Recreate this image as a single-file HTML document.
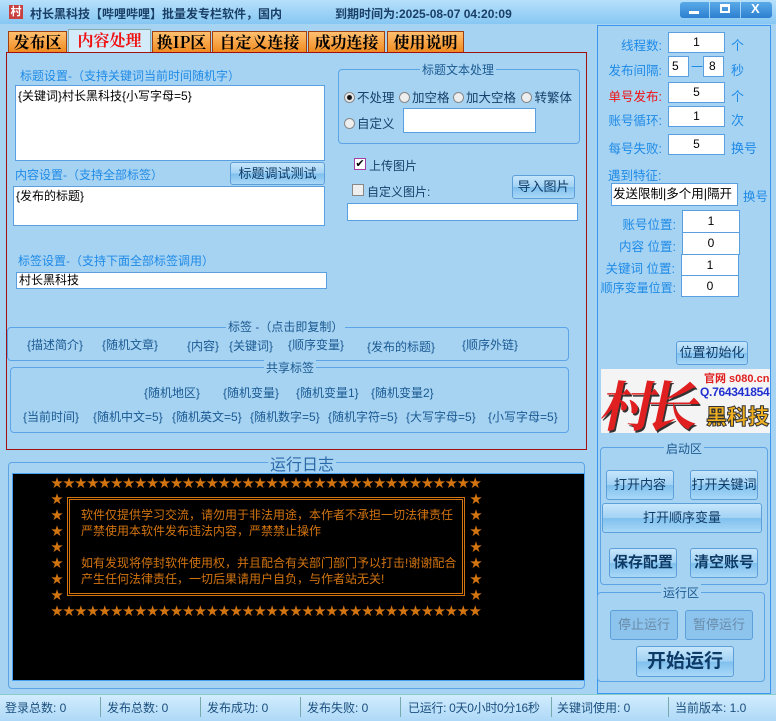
<!DOCTYPE html><html><head><meta charset="utf-8"><style>
*{margin:0;padding:0;box-sizing:border-box}
body{width:776px;height:721px;overflow:hidden;background:#a7d3f3;font-family:"Liberation Sans","Noto Sans CJK SC",sans-serif;font-size:12px;position:relative;color:#000}
.a{position:absolute;white-space:nowrap}
.lb{color:#1e8ae6}
.in{position:absolute;background:#fff;border:1px solid #5aa0e0}
.btn{position:absolute;border:1px solid #5d9fd8;border-radius:3px;background:linear-gradient(#c6e6fb,#a2d2f4 50%,#7fc0ee 51%,#a9d8f7);color:#0e3a66;text-align:center;font-size:13px;white-space:nowrap}
.grp{position:absolute;border:1px solid #5ca4e6;border-radius:4px}
.gt{position:absolute;background:#a7d3f3;padding:0 2px;color:#1b5a90;font-size:12px;white-space:nowrap}
.tab{position:absolute;top:31px;height:21px;background:linear-gradient(#ffc070,#f08b20);border:1px solid #a04010;border-bottom:none;font-size:16px;line-height:20px;text-align:center;color:#000;font-family:"Noto Serif CJK SC","Liberation Serif",serif;font-weight:bold;white-space:nowrap;overflow:hidden}
.rd{display:inline-block;width:11px;height:11px;border-radius:50%;border:1px solid #888;background:#eee;vertical-align:-1px;margin-right:2px}
.tg{color:#1a5a92}
.log{position:absolute;color:#d27410;font-size:12px;white-space:pre;line-height:16px}
.rl{position:absolute;white-space:nowrap;color:#1e8ae6;font-size:12.5px;text-align:right}
</style></head><body>
<div class="a" style="left:0;top:0;width:776px;height:24px;background:linear-gradient(#b6e0fb,#86c7f3)"></div>
<div class="a" style="left:9px;top:5px;width:14px;height:14px;background:#c84040;color:#fff;font-size:11px;text-align:center;line-height:14px;font-weight:bold">村</div>
<div class="a" style="left:30px;top:5px;font-size:12px;font-weight:bold;color:#1a3f66">村长黑科技【哔哩哔哩】批量发专栏软件，国内</div>
<div class="a" style="left:335px;top:5px;font-size:12px;font-weight:bold;color:#1a3f66">到期时间为:2025-08-07 04:20:09</div>
<div class="a" style="left:680px;top:2px;width:29px;height:16px;background:linear-gradient(#5aaae8,#2d7fd0);border-radius:3px 0 0 3px"></div>
<div class="a" style="left:710px;top:2px;width:30px;height:16px;background:linear-gradient(#5aaae8,#2d7fd0)"></div>
<div class="a" style="left:741px;top:2px;width:31px;height:16px;background:linear-gradient(#5aaae8,#2d7fd0);border-radius:0 3px 3px 0"></div>
<div class="a" style="left:689px;top:11px;width:10px;height:3px;background:#fff"></div>
<div class="a" style="left:720px;top:4px;width:10px;height:9px;border:2px solid #fff;border-top-width:3px"></div>
<div class="a" style="left:751px;top:1px;color:#fff;font-size:13px;font-weight:bold">X</div>

<div class="tab" style="left:68px;width:83px;top:29px;height:23px;background:#d4ecfa;color:#f01010;border-color:#8aa">内容处理</div>
<div class="tab" style="left:152px;width:59px">换IP区</div>
<div class="tab" style="left:212px;width:95px">自定义连接</div>
<div class="tab" style="left:308px;width:77px">成功连接</div>
<div class="tab" style="left:387px;width:77px">使用说明</div>
<div class="tab" style="left:8px;width:59px">发布区</div>
<div class="a" style="left:6px;top:52px;width:581px;height:398px;border:1px solid #a01010"></div>

<div class="a lb" style="left:20px;top:67px">标题设置-（支持关键词当前时间随机字）</div>
<div class="in" style="left:15px;top:85px;width:310px;height:76px"><div style="padding:1px 2px">{关键词}村长黑科技{小写字母=5}</div></div>
<div class="a lb" style="left:15px;top:166px">内容设置-（支持全部标签）</div>
<div class="btn" style="left:230px;top:162px;width:95px;height:23px;line-height:21px">标题调试测试</div>
<div class="in" style="left:13px;top:186px;width:312px;height:40px"><div style="padding:0 2px">{发布的标题}</div></div>
<div class="a lb" style="left:18px;top:252px">标签设置-（支持下面全部标签调用）</div>
<div class="in" style="left:16px;top:272px;width:311px;height:17px"><div style="padding:0 2px;line-height:15px">村长黑科技</div></div>

<div class="grp" style="left:338px;top:69px;width:242px;height:75px"></div>
<div class="gt" style="left:420px;top:61px">标题文本处理</div>
<div class="a" style="left:344px;top:87px;font-size:12.5px;color:#14406a"><span class="rd" style="background:radial-gradient(#111 2px,#eee 3px)"></span>不处理 <span class="rd" style="margin-left:1px"></span>加空格 <span class="rd"></span>加大空格 <span class="rd" style="margin-left:2px"></span>转繁体</div>
<div class="a" style="left:344px;top:113px;font-size:12.5px;color:#14406a"><span class="rd"></span>自定义</div>
<div class="in" style="left:403px;top:108px;width:133px;height:25px"></div>
<div class="a" style="left:354px;top:158px;width:12px;height:12px;border:1px solid #a040a0;background:#fff;font-size:11px;line-height:10px;text-align:center">✔</div>
<div class="a" style="left:369px;top:157px;color:#14406a">上传图片</div>
<div class="a" style="left:352px;top:184px;width:12px;height:12px;border:1px solid #888;background:#eee"></div>
<div class="a" style="left:367px;top:183px;color:#14406a">自定义图片:</div>
<div class="btn" style="left:512px;top:175px;width:63px;height:24px;line-height:22px">导入图片</div>
<div class="in" style="left:347px;top:203px;width:231px;height:18px"></div>

<div class="grp" style="left:7px;top:327px;width:562px;height:34px"></div>
<div class="gt" style="left:226px;top:318px">标签 -（点击即复制）</div>
<div class="a tg" style="left:27px;top:336px">{描述简介}</div>
<div class="a tg" style="left:102px;top:336px">{随机文章}</div>
<div class="a tg" style="left:187px;top:337px">{内容}</div>
<div class="a tg" style="left:229px;top:337px">{关键词}</div>
<div class="a tg" style="left:288px;top:336px">{顺序变量}</div>
<div class="a tg" style="left:367px;top:338px">{发布的标题}</div>
<div class="a tg" style="left:462px;top:336px">{顺序外链}</div>
<div class="grp" style="left:10px;top:367px;width:559px;height:66px"></div>
<div class="gt" style="left:264px;top:359px">共享标签</div>
<div class="a tg" style="left:144px;top:384px">{随机地区}</div>
<div class="a tg" style="left:223px;top:384px">{随机变量}</div>
<div class="a tg" style="left:296px;top:384px">{随机变量1}</div>
<div class="a tg" style="left:371px;top:384px">{随机变量2}</div>
<div class="a tg" style="left:23px;top:408px">{当前时间}</div>
<div class="a tg" style="left:93px;top:408px">{随机中文=5}</div>
<div class="a tg" style="left:172px;top:408px">{随机英文=5}</div>
<div class="a tg" style="left:250px;top:408px">{随机数字=5}</div>
<div class="a tg" style="left:328px;top:408px">{随机字符=5}</div>
<div class="a tg" style="left:406px;top:408px">{大写字母=5}</div>
<div class="a tg" style="left:488px;top:408px">{小写字母=5}</div>

<div class="grp" style="left:8px;top:462px;width:577px;height:227px"></div>
<div class="gt" style="left:268px;top:451px;font-size:16px;color:#2b6aa8">运行日志</div>
<div class="a" style="left:12px;top:473px;width:573px;height:208px;background:#000;border:1px solid #4aa0f0"></div>
<div class="log" style="left:51px;top:475px;letter-spacing:-0.05px">★★★★★★★★★★★★★★★★★★★★★★★★★★★★★★★★★★★★</div>
<div class="log" style="left:51px;top:491px;line-height:16px">★<br>★<br>★<br>★<br>★<br>★<br>★</div>
<div class="log" style="left:470px;top:491px;line-height:16px">★<br>★<br>★<br>★<br>★<br>★<br>★</div>
<div class="log" style="left:51px;top:603px;letter-spacing:-0.05px">★★★★★★★★★★★★★★★★★★★★★★★★★★★★★★★★★★★★</div>
<div class="a" style="left:67px;top:497px;width:398px;height:99px;border:3px double #d27410"></div>
<div class="a" style="left:67px;top:503px;width:4px;height:87px;border-left:3px double #d27410;background:#000"></div>
<div class="log" style="left:81px;top:507px">软件仅提供学习交流，请勿用于非法用途，本作者不承担一切法律责任</div>
<div class="log" style="left:81px;top:523px">严禁使用本软件发布违法内容，严禁禁止操作</div>
<div class="log" style="left:81px;top:555px">如有发现将停封软件使用权，并且配合有关部门部门予以打击!谢谢配合</div>
<div class="log" style="left:81px;top:571px">产生任何法律责任，一切后果请用户自负，与作者站无关!</div>

<div class="a" style="left:597px;top:25px;width:174px;height:669px;border:1px solid #3a96ee"></div>
<div class="rl" style="right:114px;top:35px">线程数:</div><div class="in" style="left:668px;top:32px;width:57px;height:21px;text-align:center;line-height:19px">1</div><div class="a lb" style="left:731px;top:35px;font-size:13px">个</div>
<div class="rl" style="right:114px;top:60px">发布间隔:</div><div class="in" style="left:668px;top:56px;width:21px;height:21px;line-height:19px;padding-left:3px">5</div><div class="a lb" style="left:691px;top:58px">一</div><div class="in" style="left:703px;top:56px;width:21px;height:21px;line-height:19px;padding-left:5px">8</div><div class="a lb" style="left:731px;top:60px;font-size:13px">秒</div>
<div class="rl" style="right:114px;top:86px;color:#f01010">单号发布:</div><div class="in" style="left:668px;top:82px;width:57px;height:21px;text-align:center;line-height:19px">5</div><div class="a lb" style="left:731px;top:86px;font-size:13px">个</div>
<div class="rl" style="right:114px;top:110px">账号循环:</div><div class="in" style="left:668px;top:106px;width:57px;height:21px;text-align:center;line-height:19px">1</div><div class="a lb" style="left:731px;top:110px;font-size:13px">次</div>
<div class="rl" style="right:114px;top:138px">每号失败:</div><div class="in" style="left:668px;top:134px;width:57px;height:21px;text-align:center;line-height:19px">5</div><div class="a lb" style="left:731px;top:138px;font-size:13px">换号</div>
<div class="a lb" style="left:608px;top:165px;font-size:12.5px">遇到特征:</div>
<div class="in" style="left:611px;top:183px;width:127px;height:23px;line-height:21px;padding-left:1px;font-size:12.5px;overflow:hidden">发送限制|多个用|隔开</div><div class="a lb" style="left:743px;top:186px;font-size:12.5px">换号</div>
<div class="rl" style="right:100px;top:214px">账号位置:</div><div class="in" style="left:682px;top:210px;width:58px;height:23px;text-align:center;line-height:21px">1</div>
<div class="rl" style="right:100px;top:236px">内容 位置:</div><div class="in" style="left:682px;top:232px;width:58px;height:23px;text-align:center;line-height:21px">0</div>
<div class="rl" style="right:101px;top:258px">关键词 位置:</div><div class="in" style="left:681px;top:254px;width:58px;height:22px;text-align:center;line-height:20px">1</div>
<div class="rl" style="right:100px;top:279px;font-size:12px">顺序变量位置:</div><div class="in" style="left:681px;top:275px;width:58px;height:22px;text-align:center;line-height:20px">0</div>
<div class="btn" style="left:676px;top:341px;width:72px;height:24px;line-height:22px">位置初始化</div>
<div class="a" style="left:601px;top:369px;width:169px;height:64px;background:#f4f4f4;overflow:hidden">
<div class="a" style="left:2px;top:-4px;font-size:54px;font-weight:bold;color:#e02020;font-family:'Noto Serif CJK SC',serif;letter-spacing:-10px;transform:skewX(-12deg);text-shadow:2px 2px 0 #333">村长</div>
<div class="a" style="left:103px;top:1px;font-size:11px;font-weight:bold;color:#e02020">官网 s080.cn</div>
<div class="a" style="left:99px;top:16px;font-size:12px;font-weight:bold;color:#2030d0;letter-spacing:-0.3px">Q.764341854</div>
<div class="a" style="left:105px;top:32px;font-size:21px;font-weight:900;color:#f0b020;-webkit-text-stroke:1px #333">黑科技</div></div>

<div class="grp" style="left:600px;top:447px;width:168px;height:138px"></div>
<div class="gt" style="left:664px;top:440px">启动区</div>
<div class="btn" style="left:606px;top:470px;width:68px;height:30px;line-height:28px">打开内容</div>
<div class="btn" style="left:690px;top:470px;width:68px;height:30px;line-height:28px">打开关键词</div>
<div class="btn" style="left:602px;top:503px;width:160px;height:30px;line-height:28px">打开顺序变量</div>
<div class="btn" style="left:609px;top:548px;width:68px;height:30px;line-height:28px;font-weight:bold;font-size:15px">保存配置</div>
<div class="btn" style="left:690px;top:548px;width:68px;height:30px;line-height:28px;font-weight:bold;font-size:15px">清空账号</div>
<div class="grp" style="left:597px;top:592px;width:168px;height:90px"></div>
<div class="gt" style="left:661px;top:584px">运行区</div>
<div class="btn" style="left:610px;top:610px;width:68px;height:30px;line-height:28px;color:#6a8aa8;background:#8cc4ee">停止运行</div>
<div class="btn" style="left:685px;top:610px;width:68px;height:30px;line-height:28px;color:#6a8aa8;background:#8cc4ee">暂停运行</div>
<div class="btn" style="left:636px;top:646px;width:98px;height:31px;line-height:29px;font-weight:bold;font-size:19px">开始运行</div>

<div class="a" style="left:0;top:694px;width:776px;height:27px;background:linear-gradient(#d2ecfd,#aed9f8);border-top:1px solid #8cc"></div>
<div class="a" style="left:5px;top:699px;color:#1b4f7e;font-size:12px">登录总数: 0</div>
<div class="a" style="left:107px;top:699px;color:#1b4f7e">发布总数: 0</div>
<div class="a" style="left:207px;top:699px;color:#1b4f7e">发布成功: 0</div>
<div class="a" style="left:307px;top:699px;color:#1b4f7e">发布失败: 0</div>
<div class="a" style="left:408px;top:699px;color:#1b4f7e;letter-spacing:-0.3px">已运行: 0天0小时0分16秒</div>
<div class="a" style="left:557px;top:699px;color:#1b4f7e">关键词使用: 0</div>
<div class="a" style="left:675px;top:699px;color:#1b4f7e">当前版本: 1.0</div>
<div class="a" style="left:100px;top:697px;width:1px;height:20px;background:#7aa"></div>
<div class="a" style="left:200px;top:697px;width:1px;height:20px;background:#7aa"></div>
<div class="a" style="left:300px;top:697px;width:1px;height:20px;background:#7aa"></div>
<div class="a" style="left:400px;top:697px;width:1px;height:20px;background:#7aa"></div>
<div class="a" style="left:551px;top:697px;width:1px;height:20px;background:#7aa"></div>
<div class="a" style="left:668px;top:697px;width:1px;height:20px;background:#7aa"></div>
</body></html>
